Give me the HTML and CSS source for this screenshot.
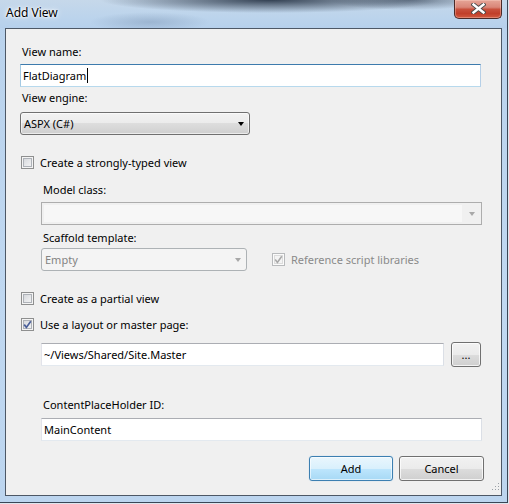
FILE: index.html
```html
<!DOCTYPE html>
<html>
<head>
<meta charset="utf-8">
<title>Add View</title>
<link rel="stylesheet" href="styles.css">
</head>
<body>
<div class="window">
  <div class="titlebar">
    <span class="title">Add View</span>
    <div class="close">
      <svg width="15" height="11" viewBox="0 0 15 11">
        <path d="M2.5 1.5 L12.5 9.5 M12.5 1.5 L2.5 9.5" stroke="#4a4a4a" stroke-width="4.2" stroke-linecap="square" fill="none"/>
        <path d="M2.5 1.5 L12.5 9.5 M12.5 1.5 L2.5 9.5" stroke="#ffffff" stroke-width="2.4" stroke-linecap="square" fill="none"/>
      </svg>
    </div>
  </div>
  <div class="client">
    <div class="form">
      <div class="lbl m-vn">View name:</div>
      <div class="tb tb-focus w-name m-tb1"><span>FlatDiagram</span><span class="caret"></span></div>
      <div class="lbl m-ve">View engine:</div>
      <div class="combo w-engine m-combo1"><span>ASPX (C#)</span><span class="arrow"></span></div>
      <div class="chk-row m-strong"><span class="chk"></span><span class="chk-text">Create a strongly-typed view</span></div>
      <div class="indent">
        <div class="lbl m-mc">Model class:</div>
        <div class="combo-edit m-mcbox"><span class="edit"></span><span class="abox"><span class="arrow arrow-dis"></span></span></div>
        <div class="lbl m-st">Scaffold template:</div>
        <div class="row m-strow">
          <div class="combo combo-dis w-scaffold"><span>Empty</span><span class="arrow arrow-dis"></span></div>
          <div class="chk-row chk-row-dis m-ref"><span class="chk chk-dis">
            <svg width="9" height="9" viewBox="0 0 9 9"><path d="M1.2 4.6 L3.4 7.4 L7.8 1.2" stroke="#a9a9a9" stroke-width="1.6" fill="none"/></svg>
          </span><span class="chk-text">Reference script libraries</span></div>
        </div>
      </div>
      <div class="chk-row m-partial"><span class="chk"></span><span class="chk-text">Create as a partial view</span></div>
      <div class="chk-row m-layout"><span class="chk">
        <svg width="9" height="9" viewBox="0 0 9 9"><path d="M1.2 4.6 L3.4 7.4 L7.8 1.2" stroke="#4a5f9a" stroke-width="1.7" fill="none"/></svg>
      </span><span class="chk-text">Use a layout or master page:</span></div>
      <div class="indent">
        <div class="row m-master">
          <div class="tb w-master"><span>~/Views/Shared/Site.Master</span></div>
          <button class="btn btn-browse">...</button>
        </div>
        <div class="lbl m-cph">ContentPlaceHolder ID:</div>
        <div class="tb w-main m-tbmain"><span>MainContent</span></div>
      </div>
    </div>
    <div class="buttons">
      <button class="btn btn-default">Add</button>
      <button class="btn btn-cancel">Cancel</button>
      <svg class="grip" width="8" height="8" viewBox="0 0 8 8">
        <rect x="6" y="0" width="1" height="1" fill="#9aa0a6"/>
        <rect x="3" y="3" width="1" height="1" fill="#9aa0a6"/>
        <rect x="6" y="3" width="1" height="1" fill="#9aa0a6"/>
        <rect x="0" y="6" width="1" height="1" fill="#9aa0a6"/>
        <rect x="3" y="6" width="1" height="1" fill="#9aa0a6"/>
        <rect x="6" y="6" width="1" height="1" fill="#9aa0a6"/>
      </svg>
    </div>
  </div>
</div>
</body>
</html>
```
FILE: styles.css
```css
* { box-sizing: border-box; }
html, body { margin: 0; padding: 0; }
body {
  width: 509px;
  height: 504px;
  overflow: hidden;
  background: #dfe6ee;
  font-family: "Noto Sans", "Open Sans", sans-serif;
  font-size: 11px;
  color: #000;
}
.window {
  width: 508px;
  height: 503px;
  border-right: 1px solid #3a4656;
  border-bottom: 1px solid #3a4656;
  display: flex;
  flex-direction: column;
  padding: 0 5px 0 5px;
  background: linear-gradient(180deg, #b9d2ec 0%, #c0d8f1 60%, #bcd5ef 100%);
}
.titlebar {
  height: 28px;
  margin: 0 -5px;
  padding: 0 5px 0 6px;
  display: flex;
  justify-content: space-between;
  align-items: flex-start;
  background:
    radial-gradient(ellipse 170px 13px at 270px 0px, rgba(35,48,66,0.9), rgba(35,48,66,0) 100%),
    radial-gradient(ellipse 80px 10px at 410px 0px, rgba(45,60,80,0.6), rgba(45,60,80,0) 100%),
    radial-gradient(ellipse 60px 10px at 150px 22px, rgba(70,95,130,0.25), rgba(70,95,130,0) 100%),
    linear-gradient(180deg, #c6d8ea 0%, #bcd4ec 60%, #b6d0ec 100%);
}
.title {
  margin-top: 5px;
  font-size: 12px;
  line-height: 15px;
  color: #000;
  text-shadow: 0 0 6px #fff, 0 0 3px #fff, 0 0 2px #fff;
}
.close {
  width: 48px;
  height: 19px;
  border: 1px solid #4b2a28;
  border-top: none;
  border-radius: 0 0 5px 5px;
  background: linear-gradient(180deg, #e6a597 0%, #d98678 40%, #c8503c 52%, #c13f2a 75%, #d25a40 100%);
  box-shadow: inset 0 0 0 1px rgba(255,220,210,0.35);
  display: flex;
  align-items: center;
  justify-content: center;
  padding-bottom: 1px;
}
.client {
  width: 497px;
  height: 468px;
  border: 1px solid #4d5866;
  background: #f0f0f0;
  display: flex;
  flex-direction: column;
  padding-left: 14px;
}
.form { display: flex; flex-direction: column; align-items: flex-start; }
.lbl { line-height: 15px; margin-left: 2px; white-space: nowrap; }
.tb {
  height: 23px;
  border: 1px solid;
  border-color: #abadb3 #dbdfe6 #e3e9ef #e2e3ea;
  background: #fff;
  padding: 0 2px 1px 2px;
  display: flex;
  align-items: center;
  line-height: 15px;
  white-space: nowrap;
}
.tb-focus { border-color: #3d7bad #b5cfe7 #b7d9ed #a4c9e3; }
.caret { display: inline-block; width: 1px; height: 15px; background: #000; margin-left: 1px; }
.w-name { width: 461px; }
.w-engine { width: 230px; }
.w-scaffold { width: 206px; }
.w-master { width: 403px; }
.w-main { width: 441px; }
.combo {
  height: 23px;
  border: 1px solid #707070;
  border-radius: 3px;
  background: linear-gradient(180deg, #f2f2f2 0%, #ebebeb 50%, #dddddd 50%, #cfcfcf 100%);
  box-shadow: inset 0 0 0 1px rgba(255,255,255,0.6);
  display: flex;
  align-items: center;
  justify-content: space-between;
  padding: 0 5px 1px 3px;
  line-height: 15px;
}
.combo-dis {
  border-color: #adb2b5;
  background: #f4f4f4;
  box-shadow: none;
  color: #838383;
}
.arrow {
  width: 0;
  height: 0;
  border-left: 3.5px solid transparent;
  border-right: 3.5px solid transparent;
  border-top: 4px solid #000;
  margin-top: 1px;
}
.arrow-dis { border-top-color: #a8a8a8; }
.combo-edit {
  width: 441px;
  height: 23px;
  border: 1px solid #adadad;
  background: #f0f0f0;
  display: flex;
  align-items: stretch;
}
.combo-edit .edit { flex: 1; margin: 2px 0 2px 2px; background: #f7f7f7; }
.combo-edit .abox { width: 19px; display: flex; align-items: center; justify-content: center; }
.indent { margin-left: 21px; display: flex; flex-direction: column; align-items: flex-start; }
.row { display: flex; align-items: center; }
.chk-row { display: flex; align-items: center; height: 15px; line-height: 15px; white-space: nowrap; }
.chk-row-dis { color: #8a8a8a; }
.chk {
  width: 13px;
  height: 13px;
  margin-left: 1px;
  margin-right: 6px;
  border: 1px solid #8e8f8f;
  background: linear-gradient(135deg, #cfd2d7 0%, #e9eaec 60%, #f7f7f7 100%);
  box-shadow: inset 0 0 0 1px #f4f4f4, inset 0 0 0 2px #aeb2b8;
  display: flex;
  align-items: center;
  justify-content: center;
}
.chk-dis {
  border-color: #b8babc;
  background: #f4f4f4;
  box-shadow: inset 0 0 0 1px #fbfbfb, inset 0 0 0 2px #dcdcdc;
}
.btn {
  height: 25px;
  border: 1px solid #707070;
  border-radius: 3px;
  background: linear-gradient(180deg, #f2f2f2 0%, #ebebeb 50%, #dddddd 50%, #cfcfcf 100%);
  box-shadow: inset 0 0 0 1px rgba(255,255,255,0.75);
  font-family: "Noto Sans", "Open Sans", sans-serif;
  font-size: 11px;
  color: #000;
  padding: 0 0 1px 0;
  line-height: 15px;
}
.btn-browse { width: 30px; margin-left: 7px; }
.btn-default {
  width: 84px;
  border-color: #3c7fb1;
  background: linear-gradient(180deg, #eaf6fd 0%, #d9f0fc 50%, #bee6fd 50%, #a7d9f5 100%);
  box-shadow: inset 0 0 0 1px rgba(255,255,255,0.6), 0 0 1px #8ec3e8;
}
.btn-cancel { width: 85px; margin-left: 6px; }
.buttons {
  margin-top: 15px;
  display: flex;
  justify-content: flex-end;
  align-items: flex-start;
  height: 37px;
}
.grip { align-self: flex-end; margin: 0 1px 2px 8px; }

.m-vn { margin-top: 15px; }
.m-tb1 { margin-top: 5px; }
.m-ve { margin-top: 3px; }
.m-combo1 { margin-top: 7px; }
.m-strong { margin-top: 20px; }
.m-mc { margin-top: 12px; }
.m-mcbox { margin-top: 5px; }
.m-st { margin-top: 5px; }
.m-strow { margin-top: 3px; }
.m-ref { margin-left: 24px; }
.m-partial { margin-top: 20px; }
.m-layout { margin-top: 11px; }
.m-master { margin-top: 10px; }
.m-cph { margin-top: 30px; }
.m-tbmain { margin-top: 6px; }
```
